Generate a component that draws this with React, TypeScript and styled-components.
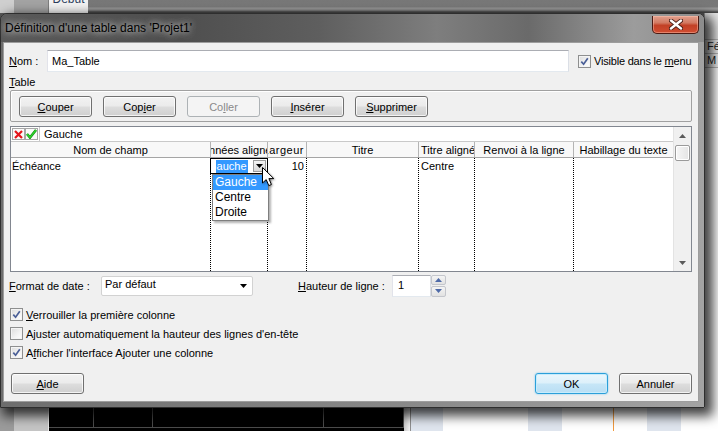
import React from 'react';
import styled, { createGlobalStyle, css } from 'styled-components';

const GlobalStyle = createGlobalStyle`
  html, body {
    margin: 0;
    padding: 0;
  }
  body {
    font-family: "Liberation Sans", Arial, sans-serif;
    font-size: 11px;
    color: #000;
  }
`;

type Align = 'left' | 'center' | 'right';

const columns: { key: string; title: string; width: number; align: Align }[] = [
  { key: 'name', title: 'Nom de champ', width: 200, align: 'center' },
  { key: 'dataAlign', title: 'Données alignées', width: 57, align: 'center' },
  { key: 'width', title: 'Largeur', width: 39, align: 'right' },
  { key: 'title', title: 'Titre', width: 112, align: 'center' },
  { key: 'titleAlign', title: 'Titre aligné', width: 56, align: 'left' },
  { key: 'wrap', title: 'Renvoi à la ligne', width: 99, align: 'center' },
  { key: 'headerWrap', title: 'Habillage du texte', width: 99, align: 'center' },
];

const justify = (a: Align) => (a === 'left' ? 'flex-start' : a === 'right' ? 'flex-end' : 'center');

export default function App() {
  return (
    <>
      <GlobalStyle />
      <Screen>
        {/* application derrière la boîte de dialogue */}
        <Backdrop>
          <Ribbon>
            <RibbonSide />
            <RibbonGroup />
            <RibbonTab>
              <span>Début</span>
            </RibbonTab>
            <RibbonRest />
          </Ribbon>
          <Middle>
            <Covered />
            <RightPane>
              <PaneTop />
              <PaneRow>Fév</PaneRow>
              <PaneRow>M</PaneRow>
              <PaneRest />
            </RightPane>
          </Middle>
          <BottomStrip>
            <Gutter />
            <RowHead />
            <DarkGrid>
              <DarkCell $w={45} />
              <DarkCell $w={59} />
              <DarkCell $w={171} />
              <DarkCell $w={80} />
            </DarkGrid>
            <Splitter />
            <Timeline />
          </BottomStrip>
        </Backdrop>

        <Window>
          <TitleBar>
            <TitleText>Définition d'une table dans 'Projet1'</TitleText>
            <CloseButton>
              <svg width="14" height="11" viewBox="0 0 14 11">
                <path d="M2 1.5 L12 9.5 M12 1.5 L2 9.5" stroke="#4a1e16" strokeWidth="4.2" strokeLinecap="round" />
                <path d="M2 1.5 L12 9.5 M12 1.5 L2 9.5" stroke="#fff" strokeWidth="2.4" strokeLinecap="round" />
              </svg>
            </CloseButton>
          </TitleBar>

          <Client>
            <NameRow>
              <FieldLabel $w={38}>
                <U>N</U>om :
              </FieldLabel>
              <TextBox>Ma_Table</TextBox>
              <CheckRow $inline>
                <Check checked />
                <span>
                  Visible dans le <U>m</U>enu
                </span>
              </CheckRow>
            </NameRow>

            <SectionLabel>
              <U>T</U>able
            </SectionLabel>
            <GroupBox>
              <Button>
                <U>C</U>ouper
              </Button>
              <Button>
                Cop<U>i</U>er
              </Button>
              <Button disabled>
                Co<U>l</U>ler
              </Button>
              <Button>
                <U>I</U>nsérer
              </Button>
              <Button>
                <U>S</U>upprimer
              </Button>
            </GroupBox>

            <Grid>
              <GridMain>
                <EditBar>
                  <EditIcon>
                    <svg width="9" height="9" viewBox="0 0 9 9">
                      <path d="M1 1 L8 8 M8 1 L1 8" stroke="#e4151b" strokeWidth="2.2" />
                    </svg>
                  </EditIcon>
                  <EditIcon>
                    <svg width="11" height="10" viewBox="0 0 11 10">
                      <path d="M1 5 L4 8.5 L10 1" stroke="#0a8a12" strokeWidth="2.6" fill="none" />
                      <path d="M1 5 L4 8.5 L10 1" stroke="#2fd32c" strokeWidth="1.4" fill="none" />
                    </svg>
                  </EditIcon>
                  <EditField>Gauche</EditField>
                </EditBar>

                <HeaderRow>
                  {columns.map((c, i) => (
                    <HeaderCell key={c.key} $w={c.width} $align={c.align} $last={i === columns.length - 1}>
                      <span>{c.title}</span>
                    </HeaderCell>
                  ))}
                </HeaderRow>

                <Body>
                  {columns.map((c, i) => (
                    <BodyColumn key={c.key} $w={c.width} $last={i === columns.length - 1}>
                      {c.key === 'name' && <DataCell $pad="0 0 0 1px">Échéance</DataCell>}
                      {c.key === 'dataAlign' && (
                        <DataCell $pad="0">
                          <Combo>
                            <ComboText>
                              <Selection>Gauche</Selection>
                            </ComboText>
                            <ComboArrow>
                              <svg width="7" height="4" viewBox="0 0 7 4">
                                <path d="M0 0 H7 L3.5 4 Z" fill="#000" />
                              </svg>
                            </ComboArrow>
                          </Combo>
                          <DropList>
                            <DropItem $selected>Gauche</DropItem>
                            <DropItem>Centre</DropItem>
                            <DropItem>Droite</DropItem>
                          </DropList>
                          <Pointer width="13" height="20" viewBox="0 0 13 20">
                            <path
                              d="M0.5 0.5 L0.5 16 L4.2 12.6 L6.8 18.6 L9.4 17.5 L6.9 11.6 L11.8 11.6 Z"
                              fill="#fff"
                              stroke="#000"
                              strokeWidth="1"
                              strokeLinejoin="round"
                            />
                          </Pointer>
                        </DataCell>
                      )}
                      {c.key === 'width' && (
                        <DataCell $pad="0 2px 0 0" $align="right">
                          10
                        </DataCell>
                      )}
                      {c.key === 'titleAlign' && <DataCell $pad="0 0 0 2px">Centre</DataCell>}
                    </BodyColumn>
                  ))}
                </Body>
              </GridMain>

              <ScrollBar>
                <ScrollArrow>
                  <svg width="7" height="4" viewBox="0 0 7 4">
                    <path d="M3.5 0 L7 4 H0 Z" fill="#5a5a5a" />
                  </svg>
                </ScrollArrow>
                <ScrollTrack>
                  <Thumb />
                </ScrollTrack>
                <ScrollArrow>
                  <svg width="7" height="4" viewBox="0 0 7 4">
                    <path d="M0 0 H7 L3.5 4 Z" fill="#5a5a5a" />
                  </svg>
                </ScrollArrow>
              </ScrollBar>
            </Grid>

            <FormatRow>
              <FieldLabel $w={92}>
                <U>F</U>ormat de date :
              </FieldLabel>
              <Select>
                <span>Par défaut</span>
                <svg width="7" height="4" viewBox="0 0 7 4">
                  <path d="M0 0 H7 L3.5 4 Z" fill="#000" />
                </svg>
              </Select>
              <FieldLabel $w={94} $gap={45}>
                <U>H</U>auteur de ligne :
              </FieldLabel>
              <NumberBox>1</NumberBox>
              <Spinner>
                <SpinHalf>
                  <svg width="7" height="4" viewBox="0 0 7 4">
                    <path d="M3.5 0 L7 4 H0 Z" fill="#4e6aa8" />
                  </svg>
                </SpinHalf>
                <SpinHalf>
                  <svg width="7" height="4" viewBox="0 0 7 4">
                    <path d="M0 0 H7 L3.5 4 Z" fill="#4e6aa8" />
                  </svg>
                </SpinHalf>
              </Spinner>
            </FormatRow>

            <Options>
              <CheckRow>
                <Check checked />
                <span>
                  <U>V</U>errouiller la première colonne
                </span>
              </CheckRow>
              <CheckRow>
                <Check />
                <span>
                  A<U>j</U>uster automatiquement la hauteur des lignes d'en-tête
                </span>
              </CheckRow>
              <CheckRow>
                <Check checked />
                <span>
                  A<U>f</U>ficher l'interface Ajouter une colonne
                </span>
              </CheckRow>
            </Options>

            <Footer>
              <Button>
                <U>A</U>ide
              </Button>
              <FooterSpacer />
              <Button $default>OK</Button>
              <Button>Annuler</Button>
            </Footer>
          </Client>
        </Window>
      </Screen>
    </>
  );
}

const Check = ({ checked }: { checked?: boolean }) => (
  <CheckBoxFrame>
    {checked && (
      <svg width="9" height="9" viewBox="0 0 9 9">
        <path d="M1.3 4.6 L3.6 7.2 L7.8 1.2" stroke="#4a5f97" strokeWidth="1.7" fill="none" />
      </svg>
    )}
  </CheckBoxFrame>
);

/* ---------- fond : application ---------- */

const Screen = styled.div`
  position: relative;
  width: 718px;
  height: 431px;
  overflow: hidden;
  background: #d8d8d8;
`;

const Backdrop = styled.div`
  display: flex;
  flex-direction: column;
  width: 100%;
  height: 100%;
`;

const Ribbon = styled.div`
  display: flex;
  flex: 0 0 13px;
`;

const RibbonSide = styled.div`
  width: 14px;
  background: #cfcfcf;
`;

const RibbonGroup = styled.div`
  width: 34px;
  background: #a3a3a3;
  border-right: 1px solid #7d7d7d;
`;

const RibbonTab = styled.div`
  width: 39px;
  height: 13px;
  overflow: hidden;
  background: #f2f2f2;
  color: #2a3d5c;
  font-size: 12px;
  text-align: center;

  span {
    display: block;
    margin-top: -8px;
    line-height: 14px;
  }
`;

const RibbonRest = styled.div`
  flex: 1;
  background: linear-gradient(#777 0, #7a7a7a 7px, #9a9a9a 8px, #8a8a8a 10px, #4a4a4a 12px);
`;

const Middle = styled.div`
  display: flex;
  flex: 1;
`;

const Covered = styled.div`
  flex: 1;
  background: #5a5a5a;
`;

const RightPane = styled.div`
  width: 13px;
  display: flex;
  flex-direction: column;
  background: #f4f4f4;
  border-left: 1px solid #9a9a9a;
`;

const PaneTop = styled.div`
  height: 26px;
  background: #e6e6e6;
  border-bottom: 1px solid #b8b8b8;
`;

const PaneRow = styled.div`
  height: 13px;
  line-height: 13px;
  padding-left: 2px;
  border-bottom: 1px solid #b8b8b8;
  color: #222;
  white-space: nowrap;
  overflow: hidden;
`;

const PaneRest = styled.div`
  flex: 1;
  background: #fff;
`;

const BottomStrip = styled.div`
  display: flex;
  flex: 0 0 31px;
`;

const Gutter = styled.div`
  width: 14px;
  background: #9b9b9b;
`;

const RowHead = styled.div`
  width: 34px;
  background: #c4c4c4;
  border-right: 1px solid #e8e8e8;
`;

const DarkGrid = styled.div`
  display: flex;
  background: #000;
`;

const DarkCell = styled.div<{ $w: number }>`
  width: ${(p) => p.$w}px;
  box-sizing: border-box;
  height: 28px;
  border-right: 1px solid #4b4b4b;
  border-bottom: 1px solid #4b4b4b;
`;

const Splitter = styled.div`
  width: 6px;
  background: linear-gradient(90deg, #c9c9c9, #f2f2f2);
  border-right: 1px solid #8f8f8f;
`;

const Timeline = styled.div`
  flex: 1;
  background:
    linear-gradient(
      to right,
      #dfe5ee 0 32px,
      transparent 32px 117px,
      #dfe5ee 117px 151px,
      transparent 151px 202px,
      #f19a3e 202px 203px,
      transparent 203px 236px,
      #dfe5ee 236px 270px,
      transparent 270px
    ),
    #fff;
`;

/* ---------- fenêtre ---------- */

const Window = styled.div`
  position: absolute;
  left: 0;
  top: 13px;
  width: 705px;
  height: 395px;
  box-sizing: border-box;
  display: flex;
  flex-direction: column;
  padding: 0 5px 5px 2px;
  border: 1px solid #2e2e2e;
  border-radius: 7px 7px 0 0;
  background: linear-gradient(90deg, #6d6d6d 0%, #8a8a8a 60%, #a3a3a3 100%);
  box-shadow: 5px 5px 12px 3px rgba(0, 0, 0, 0.75);
`;

const TitleBar = styled.div`
  height: 28px;
  flex: 0 0 28px;
  display: flex;
  align-items: flex-start;
  justify-content: space-between;
  margin: 0 -5px 0 -2px;
  padding: 0 5px 0 2px;
  border-radius: 6px 6px 0 0;
  background: linear-gradient(
    90deg,
    #5a5a5a 0%,
    #4e4e4e 25%,
    #5e5e5e 45%,
    #7e7e7e 62%,
    #6a6a6a 75%,
    #9c9c9c 90%,
    #8c8c8c 100%
  );
`;

const TitleText = styled.div`
  margin-top: 7px;
  padding-left: 2px;
  font-size: 12px;
  line-height: 15px;
  color: #000;
  text-shadow: 0 0 6px rgba(225, 225, 225, 0.9), 0 0 10px rgba(200, 200, 200, 0.8);
`;

const CloseButton = styled.div`
  margin-top: 2px;
  width: 47px;
  height: 18px;
  box-sizing: border-box;
  display: flex;
  align-items: center;
  justify-content: center;
  border: 1px solid #4b1a12;
  border-top: none;
  border-radius: 0 0 5px 5px;
  background: linear-gradient(#e2a08e 0%, #d27a62 40%, #c24126 55%, #d14d31 100%);
  box-shadow: inset 0 0 0 1px rgba(255, 200, 180, 0.45);
`;

const Client = styled.div`
  height: 360px;
  box-sizing: border-box;
  display: flex;
  flex-direction: column;
  padding: 0 6px;
  background: #f0f0f0;
  border: 1px solid #9d9d9d;
`;

const U = styled.span`
  text-decoration: underline;
  text-underline-offset: 1px;
`;

const NameRow = styled.div`
  display: flex;
  align-items: center;
  height: 22px;
  margin-top: 7px;
`;

const FieldLabel = styled.div<{ $w: number; $gap?: number }>`
  width: ${(p) => p.$w}px;
  flex: 0 0 ${(p) => p.$w}px;
  margin-left: ${(p) => (p.$gap ? p.$gap : -1)}px;
  white-space: nowrap;
`;

const TextBox = styled.div`
  width: 522px;
  height: 22px;
  box-sizing: border-box;
  padding-left: 4px;
  line-height: 20px;
  background: #fff;
  border: 1px solid;
  border-color: #abadb3 #dbdfe6 #e3e9ef #e2e3ea;
`;

const CheckRow = styled.div<{ $inline?: boolean }>`
  display: flex;
  align-items: center;
  gap: 3px;
  height: 19px;
  white-space: nowrap;
  ${(p) =>
    p.$inline &&
    css`
      margin-left: 9px;
      letter-spacing: -0.2px;
    `}
`;

const CheckBoxFrame = styled.span`
  width: 13px;
  height: 13px;
  flex: 0 0 13px;
  box-sizing: border-box;
  display: inline-flex;
  align-items: center;
  justify-content: center;
  border: 1px solid #8e8f8f;
  background: linear-gradient(135deg, #dcdcdc 0%, #f3f3f3 60%, #fff 100%);
  box-shadow: inset 0 0 0 1px #f4f4f4;
`;

const SectionLabel = styled.div`
  height: 15px;
  line-height: 15px;
  margin-top: 3px;
  margin-left: -1px;
`;

const GroupBox = styled.div`
  height: 32px;
  box-sizing: border-box;
  display: flex;
  gap: 11px;
  padding: 5px 0 0 8px;
  border: 1px solid #a0a0a0;
  border-radius: 2px;
  box-shadow: inset 1px 1px 0 #fff;
`;

const Button = styled.button<{ $default?: boolean }>`
  width: 73px;
  height: 21px;
  box-sizing: border-box;
  padding: 0;
  font: inherit;
  font-size: 11px;
  color: #000;
  border: 1px solid #707070;
  border-radius: 3px;
  background: linear-gradient(#f2f2f2 0%, #ebebeb 48%, #dddddd 52%, #cfcfcf 100%);
  box-shadow: inset 0 0 0 1px rgba(255, 255, 255, 0.75);

  &:disabled {
    color: #8a8a8a;
    border-color: #adb2b5;
    background: #f4f4f4;
    box-shadow: none;
  }

  ${(p) =>
    p.$default &&
    css`
      border-color: #2c9fd9;
      background: linear-gradient(#ebf6fc 0%, #dcf0fa 48%, #c6e6f7 52%, #b9def4 100%);
      box-shadow: inset 0 0 0 1px #c7ecfc, 0 0 2px #6ec7f2;
    `}
`;

/* ---------- grille ---------- */

const Grid = styled.div`
  position: relative;
  display: flex;
  height: 146px;
  box-sizing: border-box;
  margin-top: 4px;
  border: 1px solid #828790;
  background: #fff;
`;

const GridMain = styled.div`
  width: 662px;
  display: flex;
  flex-direction: column;
`;

const EditBar = styled.div`
  display: flex;
  align-items: center;
  height: 14px;
  border-bottom: 1px solid #c9c9c9;
  padding-left: 1px;
`;

const EditIcon = styled.span`
  width: 13px;
  height: 12px;
  box-sizing: border-box;
  display: inline-flex;
  align-items: center;
  justify-content: center;
  border: 1px solid #a7a7a7;
  background: #fafafa;
`;

const EditField = styled.div`
  flex: 1;
  height: 14px;
  margin-left: 1px;
  padding-left: 4px;
  line-height: 14px;
  border-left: 1px solid #c9c9c9;
`;

const HeaderRow = styled.div`
  display: flex;
  height: 15px;
  border-bottom: 1px solid #a5a5a5;
  background: #f8f8f8;
`;

const HeaderCell = styled.div<{ $w: number; $align: Align; $last: boolean }>`
  width: ${(p) => p.$w}px;
  flex: 0 0 ${(p) => p.$w}px;
  box-sizing: border-box;
  display: flex;
  align-items: center;
  justify-content: ${(p) => justify(p.$align)};
  padding: ${(p) => (p.$align === 'left' ? '0 0 0 2px' : p.$align === 'right' ? '0 2px 0 0' : '0')};
  overflow: hidden;
  white-space: nowrap;
  border-right: ${(p) => (p.$last ? 'none' : '1px solid #b4b4b4')};

  span {
    flex: 0 0 auto;
    letter-spacing: ${(p) => (p.$align === 'right' ? '0.5px' : 'normal')};
  }
`;

const Body = styled.div`
  flex: 1;
  display: flex;
`;

const BodyColumn = styled.div<{ $w: number; $last: boolean }>`
  width: ${(p) => p.$w}px;
  flex: 0 0 ${(p) => p.$w}px;
  box-sizing: border-box;
  border-right: ${(p) => (p.$last ? 'none' : '1px dotted #000')};
`;

const DataCell = styled.div<{ $pad: string; $align?: Align }>`
  position: relative;
  height: 16px;
  line-height: 16px;
  padding: ${(p) => p.$pad};
  text-align: ${(p) => p.$align ?? 'left'};
  white-space: nowrap;
`;

const Combo = styled.div`
  display: flex;
  align-items: center;
  height: 16px;
  box-sizing: border-box;
  margin-left: -1px;
  margin-right: -1px;
  border: 1px solid #000;
  background: #fff;
`;

const ComboText = styled.div`
  width: 34px;
  margin-left: 5px;
  overflow: hidden;
  line-height: 13px;
`;

const Selection = styled.span`
  display: inline-block;
  margin-left: -8px;
  padding-right: 1px;
  background: #3399ff;
  color: #fff;
`;

const ComboArrow = styled.div`
  margin-left: auto;
  margin-right: 1px;
  width: 13px;
  height: 12px;
  box-sizing: border-box;
  display: flex;
  align-items: center;
  justify-content: center;
  border: 1px solid #9c9c9c;
  background: linear-gradient(#f4f4f4, #d8d8d8);
`;

const DropList = styled.div`
  position: absolute;
  left: 1px;
  top: 16px;
  width: 57px;
  box-sizing: border-box;
  border: 1px solid #7f7f7f;
  background: #fff;
  box-shadow: 2px 2px 2px rgba(0, 0, 0, 0.3);
  z-index: 2;
`;

const DropItem = styled.div<{ $selected?: boolean }>`
  height: 15px;
  line-height: 15px;
  padding-left: 2px;
  font-size: 12px;
  ${(p) =>
    p.$selected &&
    css`
      background: #3399ff;
      color: #fff;
    `}
`;

const Pointer = styled.svg`
  position: absolute;
  left: 51px;
  top: 9px;
  z-index: 3;
  filter: drop-shadow(1px 1px 1px rgba(0, 0, 0, 0.35));
`;

const ScrollBar = styled.div`
  flex: 1;
  display: flex;
  flex-direction: column;
  background: #f0f0f0;
  border-left: 1px solid #e3e3e3;
`;

const ScrollArrow = styled.div`
  height: 17px;
  display: flex;
  align-items: center;
  justify-content: center;
`;

const ScrollTrack = styled.div`
  flex: 1;
  padding: 1px 1px 0 1px;
`;

const Thumb = styled.div`
  height: 16px;
  box-sizing: border-box;
  border: 1px solid #9a9a9a;
  border-radius: 2px;
  background: linear-gradient(90deg, #f6f6f6, #e4e4e4);
  box-shadow: inset 0 0 0 1px #fff;
`;

/* ---------- bas de la boîte ---------- */

const FormatRow = styled.div`
  display: flex;
  align-items: center;
  height: 21px;
  margin-top: 3px;
  white-space: nowrap;
`;

const Select = styled.div`
  width: 152px;
  height: 20px;
  box-sizing: border-box;
  display: flex;
  align-items: center;
  justify-content: space-between;
  padding: 0 5px 0 3px;
  background: #fff;
  border: 1px solid #d2d2d2;
  border-radius: 2px;

  span {
    margin-top: -3px;
  }
`;

const NumberBox = styled.div`
  width: 39px;
  height: 22px;
  box-sizing: border-box;
  padding-left: 5px;
  line-height: 18px;
  background: #fff;
  border: 1px solid;
  border-color: #abadb3 #dbdfe6 #e3e9ef #e2e3ea;
`;

const Spinner = styled.div`
  width: 15px;
  height: 22px;
  display: flex;
  flex-direction: column;
  gap: 1px;
`;

const SpinHalf = styled.div`
  flex: 1;
  display: flex;
  align-items: center;
  justify-content: center;
  border: 1px solid #c4c6cc;
  border-radius: 2px;
  background: linear-gradient(#f4f4f4, #e2e2e2);
`;

const Options = styled.div`
  display: flex;
  flex-direction: column;
  margin-top: 9px;
`;

const Footer = styled.div`
  display: flex;
  gap: 11px;
  margin-top: 11px;
  padding-left: 1px;
`;

const FooterSpacer = styled.div`
  flex: 1;
`;
